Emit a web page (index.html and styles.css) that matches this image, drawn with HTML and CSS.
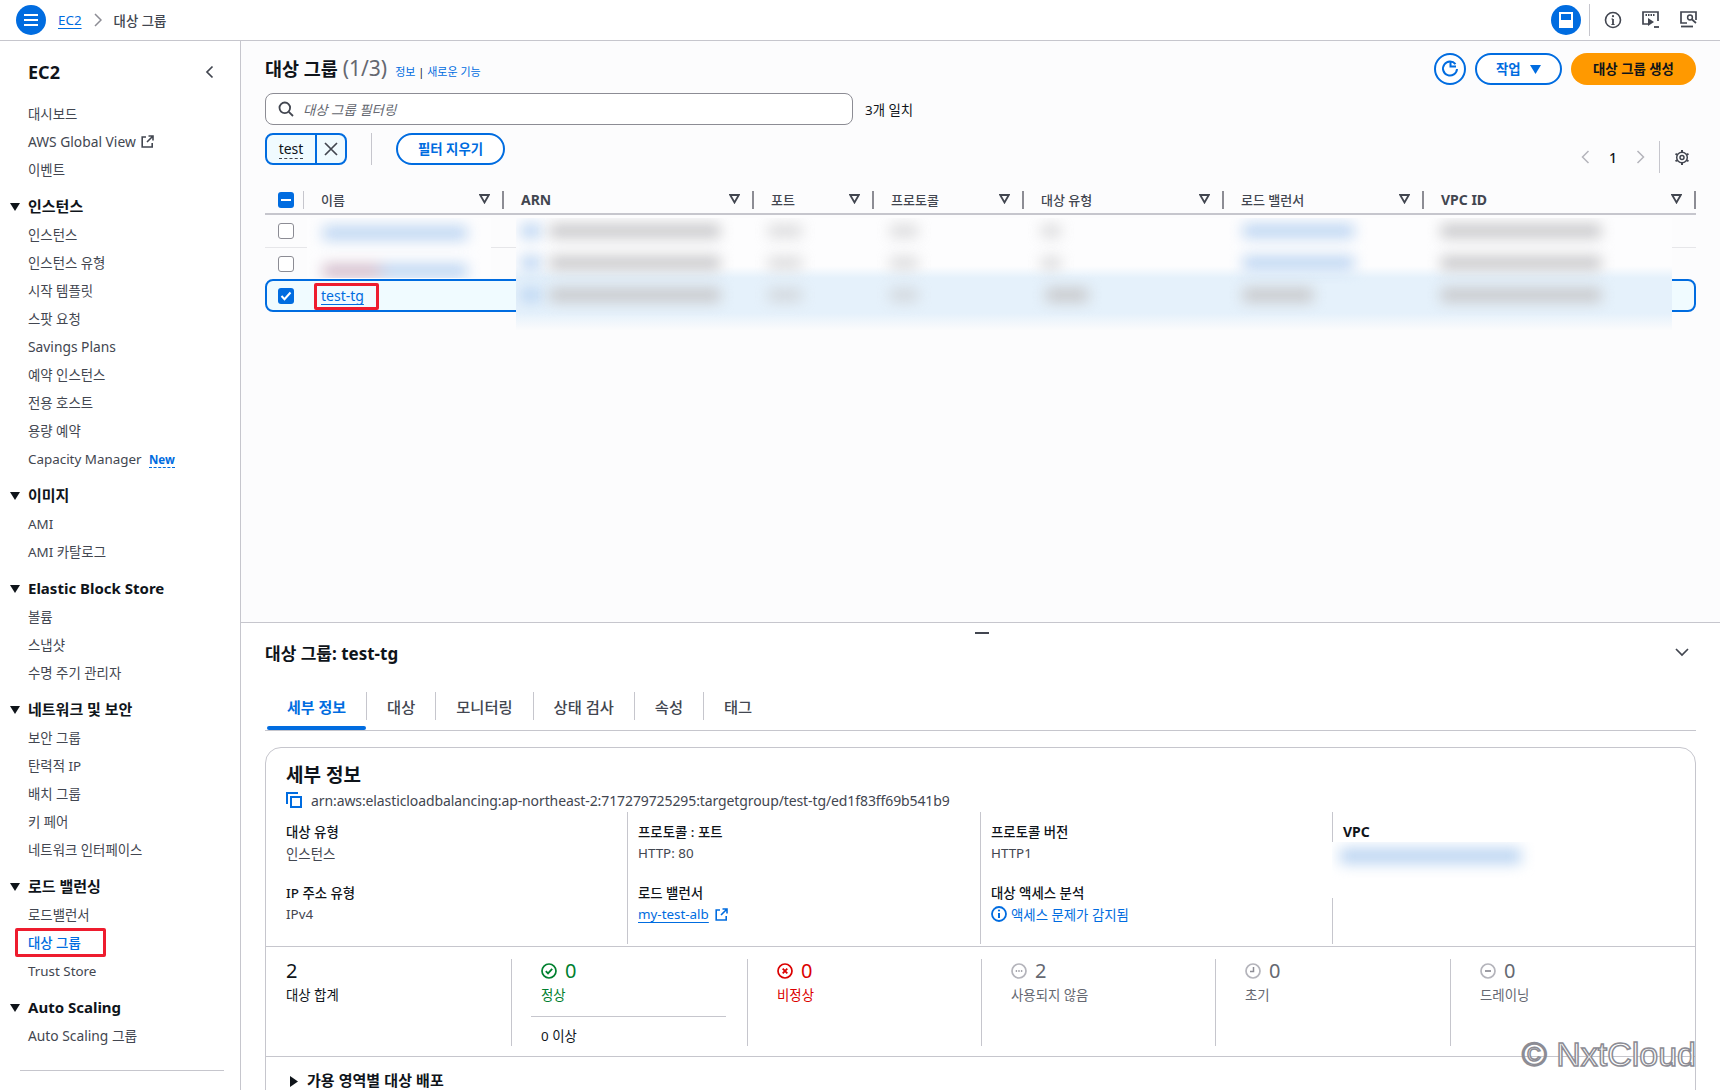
FILE: index.html
```html
<!DOCTYPE html>
<html lang="ko">
<head>
    <meta charset="UTF-8">
    <title>대상 그룹 | EC2</title>
    <link rel="stylesheet" href="styles.css">
</head>
<body>
    <header class="topbar">
        <button class="round-btn menu-btn">
            <svg width="16" height="14" viewBox="0 0 16 14"><path d="M1 2h14M1 7h14M1 12h14" stroke="#fff" stroke-width="2" fill="none"/></svg>
        </button>
        <a class="crumb-link">EC2</a>
        <svg class="crumb-sep" width="8" height="14" viewBox="0 0 8 14"><path d="M1 1l6 6-6 6" stroke="#8c8c94" stroke-width="1.5" fill="none"/></svg>
        <span class="crumb-current">대상 그룹</span>
        <div class="topbar-right">
            <button class="round-btn panel-btn">
                <svg width="14" height="16" viewBox="0 0 14 16"><rect x="1" y="1" width="12" height="14" fill="none" stroke="#fff" stroke-width="2"/><rect x="1" y="8" width="12" height="7" fill="#fff"/></svg>
            </button>
            <span class="topbar-div"></span>
            <svg class="top-icon" width="18" height="18" viewBox="0 0 18 18"><circle cx="9" cy="9" r="7.5" fill="none" stroke="#424650" stroke-width="1.6"/><path d="M9 8v5.5" stroke="#424650" stroke-width="1.8"/><circle cx="9" cy="5.2" r="1.1" fill="#424650"/><path d="M7.4 8h1.6M7.4 13.5h3.2" stroke="#424650" stroke-width="1.2"/></svg>
            <svg class="top-icon" width="18" height="18" viewBox="0 0 18 18"><path d="M6 13H1V1h15v9" fill="none" stroke="#424650" stroke-width="1.7"/><path d="M3.5 4h9" stroke="#424650" stroke-width="2" stroke-dasharray="1.5 1"/><path d="M6 7l6 4-6 4z" fill="#424650"/><path d="M12 16h5" stroke="#424650" stroke-width="1.8"/></svg>
            <svg class="top-icon" width="18" height="18" viewBox="0 0 18 18"><path d="M7 12H1V1h15v8" fill="none" stroke="#424650" stroke-width="1.7"/><circle cx="10" cy="6.5" r="2.4" fill="none" stroke="#424650" stroke-width="1.5"/><path d="M12 8.5l4 3.5" stroke="#424650" stroke-width="1.7"/><path d="M1 15.5h12" stroke="#424650" stroke-width="1.8"/></svg>
        </div>
    </header>

    <div class="layout">
        <aside class="sidebar">
            <div class="side-title">
                <span>EC2</span>
                <svg width="9" height="14" viewBox="0 0 9 14"><path d="M7.5 1.5L2 7l5.5 5.5" stroke="#424650" stroke-width="1.7" fill="none"/></svg>
            </div>
            <ul class="nav-list">
                <li>대시보드</li>
                <li class="nav-latin">AWS Global View <svg class="ext-icon" width="13" height="13" viewBox="0 0 13 13"><path d="M5 2H1.2v10h10V8M7.5 1h4.5v4.5M12 1L6 7" fill="none" stroke="#424650" stroke-width="1.6"/></svg></li>
                <li>이벤트</li>
            </ul>
            <h3 class="nav-head">인스턴스</h3>
            <ul class="nav-list">
                <li>인스턴스</li>
                <li>인스턴스 유형</li>
                <li>시작 템플릿</li>
                <li>스팟 요청</li>
                <li class="nav-latin">Savings Plans</li>
                <li>예약 인스턴스</li>
                <li>전용 호스트</li>
                <li>용량 예약</li>
                <li>Capacity Manager <span class="new-tag">New</span></li>
            </ul>
            <h3 class="nav-head">이미지</h3>
            <ul class="nav-list">
                <li>AMI</li>
                <li>AMI 카탈로그</li>
            </ul>
            <h3 class="nav-head">Elastic Block Store</h3>
            <ul class="nav-list">
                <li>볼륨</li>
                <li>스냅샷</li>
                <li>수명 주기 관리자</li>
            </ul>
            <h3 class="nav-head">네트워크 및 보안</h3>
            <ul class="nav-list">
                <li>보안 그룹</li>
                <li>탄력적 IP</li>
                <li>배치 그룹</li>
                <li>키 페어</li>
                <li>네트워크 인터페이스</li>
            </ul>
            <h3 class="nav-head">로드 밸런싱</h3>
            <ul class="nav-list">
                <li>로드밸런서</li>
                <li class="nav-active">대상 그룹</li>
                <li>Trust Store</li>
            </ul>
            <h3 class="nav-head">Auto Scaling</h3>
            <ul class="nav-list">
                <li class="nav-latin">Auto Scaling 그룹</li>
            </ul>
            <div class="side-rule"></div>
        </aside>

        <main class="main">
            <section class="list-panel">
                <div class="title-row">
                    <h1 class="page-title">대상 그룹 <span class="count">(1/3)</span></h1>
                    <span class="title-links"><a>정보</a> | <a>새로운 기능</a></span>
                    <div class="actions">
                        <button class="btn-refresh">
                            <svg width="18" height="18" viewBox="0 0 18 18"><path d="M14.5 4.2A7 7 0 1 0 16 9" fill="none" stroke="#006ce0" stroke-width="2"/><path d="M9.5 1v5.5H15" fill="none" stroke="#006ce0" stroke-width="2"/></svg>
                        </button>
                        <button class="btn-outline btn-action">작업 <svg width="11" height="9" viewBox="0 0 11 9"><path d="M0 0h11L5.5 9z" fill="#006ce0"/></svg></button>
                        <button class="btn-primary">대상 그룹 생성</button>
                    </div>
                </div>

                <div class="search-row">
                    <div class="search-box">
                        <svg width="16" height="16" viewBox="0 0 16 16"><circle cx="6.8" cy="6.8" r="5.3" fill="none" stroke="#424650" stroke-width="1.8"/><path d="M10.8 10.8l4.2 4.2" stroke="#424650" stroke-width="1.8"/></svg>
                        <span>대상 그룹 필터링</span>
                    </div>
                    <span class="match-count">3개 일치</span>
                </div>

                <div class="chip-row">
                    <div class="chip">
                        <span class="chip-text"><span>test</span></span>
                        <span class="chip-close">
                            <svg width="14" height="14" viewBox="0 0 14 14"><path d="M1 1l12 12M13 1L1 13" stroke="#424650" stroke-width="1.7"/></svg>
                        </span>
                    </div>
                    <span class="chip-div"></span>
                    <button class="btn-outline btn-clear">필터 지우기</button>
                    <div class="pager">
                        <svg width="9" height="14" viewBox="0 0 9 14"><path d="M7.5 1L1.5 7l6 6" stroke="#b4b4bb" stroke-width="1.5" fill="none"/></svg>
                        <span class="page-num">1</span>
                        <svg width="9" height="14" viewBox="0 0 9 14"><path d="M1.5 1l6 6-6 6" stroke="#b4b4bb" stroke-width="1.5" fill="none"/></svg>
                        <span class="pager-div"></span>
                        <svg width="16" height="17" viewBox="0 0 16 17"><circle cx="8" cy="8.5" r="5.3" fill="none" stroke="#424650" stroke-width="1.5"/><circle cx="8" cy="8.5" r="2" fill="none" stroke="#424650" stroke-width="1.5"/><path d="M8 1v2M8 14v2M1.5 4.75l1.73 1M12.77 11.25l1.73 1M1.5 12.25l1.73-1M12.77 5.75l1.73-1" stroke="#424650" stroke-width="2"/></svg>
                    </div>
                </div>

                <div class="table">
                    <div class="table-head">
                        <div class="th th-check"><span class="cb cb-on"><svg width="10" height="2" viewBox="0 0 10 2"><path d="M0 1h10" stroke="#fff" stroke-width="2"/></svg></span></div>
                        <div class="th">이름 <svg class="filter-ic" width="11" height="10" viewBox="0 0 11 10"><path d="M1.2 1h8.6L5.5 8.5z" fill="none" stroke="#424650" stroke-width="1.8"/></svg></div>
                        <div class="th th-latin">ARN <svg class="filter-ic" width="11" height="10" viewBox="0 0 11 10"><path d="M1.2 1h8.6L5.5 8.5z" fill="none" stroke="#424650" stroke-width="1.8"/></svg></div>
                        <div class="th">포트 <svg class="filter-ic" width="11" height="10" viewBox="0 0 11 10"><path d="M1.2 1h8.6L5.5 8.5z" fill="none" stroke="#424650" stroke-width="1.8"/></svg></div>
                        <div class="th">프로토콜 <svg class="filter-ic" width="11" height="10" viewBox="0 0 11 10"><path d="M1.2 1h8.6L5.5 8.5z" fill="none" stroke="#424650" stroke-width="1.8"/></svg></div>
                        <div class="th">대상 유형 <svg class="filter-ic" width="11" height="10" viewBox="0 0 11 10"><path d="M1.2 1h8.6L5.5 8.5z" fill="none" stroke="#424650" stroke-width="1.8"/></svg></div>
                        <div class="th">로드 밸런서 <svg class="filter-ic" width="11" height="10" viewBox="0 0 11 10"><path d="M1.2 1h8.6L5.5 8.5z" fill="none" stroke="#424650" stroke-width="1.8"/></svg></div>
                        <div class="th th-latin">VPC ID <svg class="filter-ic" width="11" height="10" viewBox="0 0 11 10"><path d="M1.2 1h8.6L5.5 8.5z" fill="none" stroke="#424650" stroke-width="1.8"/></svg></div>
                    </div>
                    <div class="tr"><span class="cb"></span></div>
                    <div class="tr tr-second"><span class="cb"></span></div>
                    <div class="tr tr-selected">
                        <span class="cb cb-on"><svg width="12" height="10" viewBox="0 0 12 10"><path d="M1.5 5l3 3.2L10.5 1.5" fill="none" stroke="#fff" stroke-width="2"/></svg></span>
                        <a class="name-link">test-tg</a>
                    </div>
                </div>

                <!-- 가려진 값 -->
                <div class="mask mask-name">
                    <span class="smear smear-blue smear-name"></span>
                    <span class="smear smear-mix smear-name"></span>
                </div>
                <div class="mask mask-rest">
                    <div class="mask-row">
                        <span class="smear smear-blue s-arn-a"></span><span class="smear s-arn-b"></span><span class="smear s-faint s-port"></span><span class="smear s-faint s-proto"></span><span class="smear s-faint s-type"></span><span class="smear smear-blue s-lb"></span><span class="smear s-vpc"></span>
                    </div>
                    <div class="mask-row">
                        <span class="smear smear-blue s-arn-a"></span><span class="smear s-arn-b"></span><span class="smear s-faint s-port"></span><span class="smear s-faint s-proto"></span><span class="smear s-faint s-type"></span><span class="smear smear-blue s-lb"></span><span class="smear s-vpc"></span>
                    </div>
                    <div class="mask-row">
                        <span class="smear smear-blue s-arn-a"></span><span class="smear s-arn-b"></span><span class="smear s-faint s-port"></span><span class="smear s-faint s-proto"></span><span class="smear s-type-long"></span><span class="smear s-lb-short"></span><span class="smear s-vpc s-vpc-far"></span>
                    </div>
                </div>
            </section>

            <section class="detail-panel">
                <div class="drag-handle"></div>
                <div class="detail-head">
                    <h2>대상 그룹: test-tg</h2>
                    <svg width="14" height="9" viewBox="0 0 14 9"><path d="M1 1l6 6 6-6" stroke="#424650" stroke-width="1.7" fill="none"/></svg>
                </div>
                <nav class="tabs">
                    <a class="tab tab-active">세부 정보</a>
                    <a class="tab">대상</a>
                    <a class="tab">모니터링</a>
                    <a class="tab">상태 검사</a>
                    <a class="tab">속성</a>
                    <a class="tab">태그</a>
                </nav>

                <div class="card">
                    <div class="card-top">
                        <h2>세부 정보</h2>
                        <div class="arn-line">
                            <svg width="16" height="16" viewBox="0 0 16 16"><path d="M1 12V1h11" fill="none" stroke="#006ce0" stroke-width="2"/><rect x="5" y="5" width="10" height="10" fill="none" stroke="#006ce0" stroke-width="2"/></svg>
                            <span>arn:aws:elasticloadbalancing:ap-northeast-2:717279725295:targetgroup/test-tg/ed1f83ff69b541b9</span>
                        </div>
                    </div>
                    <div class="info-grid">
                        <div class="info-col">
                            <div class="info-label">대상 유형</div>
                            <div class="info-value">인스턴스</div>
                            <div class="info-label">IP 주소 유형</div>
                            <div class="info-value">IPv4</div>
                        </div>
                        <div class="info-col">
                            <div class="info-label">프로토콜 : 포트</div>
                            <div class="info-value">HTTP: 80</div>
                            <div class="info-label">로드 밸런서</div>
                            <div class="info-value"><a class="link">my-test-alb</a> <svg width="13" height="13" viewBox="0 0 13 13"><path d="M5 2H1.2v10h10V8M7.5 1h4.5v4.5M12 1L6 7" fill="none" stroke="#006ce0" stroke-width="1.6"/></svg></div>
                        </div>
                        <div class="info-col">
                            <div class="info-label">프로토콜 버전</div>
                            <div class="info-value">HTTP1</div>
                            <div class="info-label">대상 액세스 분석</div>
                            <div class="info-value info-blue">
                                <svg width="16" height="16" viewBox="0 0 16 16"><circle cx="8" cy="8" r="7" fill="none" stroke="#006ce0" stroke-width="1.8"/><path d="M8 7v5" stroke="#006ce0" stroke-width="2"/><circle cx="8" cy="4.5" r="1.1" fill="#006ce0"/></svg>
                                <span>액세스 문제가 감지됨</span>
                            </div>
                        </div>
                        <div class="info-col">
                            <div class="info-label info-label-strong">VPC</div>
                            <div class="vpc-mask"><span class="smear smear-blue"></span></div>
                        </div>
                    </div>
                    <div class="stats">
                        <div class="stat">
                            <div class="stat-num">2</div>
                            <div class="stat-label">대상 합계</div>
                        </div>
                        <div class="stat stat-ok">
                            <div class="stat-num">
                                <svg width="16" height="16" viewBox="0 0 16 16"><circle cx="8" cy="8" r="7" fill="none" stroke="#00802f" stroke-width="1.7"/><path d="M4.8 8.2l2.2 2.2 4.2-4.6" fill="none" stroke="#00802f" stroke-width="1.8"/></svg>
                                0
                            </div>
                            <div class="stat-label">정상</div>
                            <div class="stat-rule"></div>
                            <div class="stat-note">0 이상</div>
                        </div>
                        <div class="stat stat-bad">
                            <div class="stat-num">
                                <svg width="16" height="16" viewBox="0 0 16 16"><circle cx="8" cy="8" r="7" fill="none" stroke="#db0000" stroke-width="1.7"/><path d="M5.7 5.7l4.6 4.6M10.3 5.7l-4.6 4.6" stroke="#db0000" stroke-width="1.8"/></svg>
                                0
                            </div>
                            <div class="stat-label">비정상</div>
                        </div>
                        <div class="stat stat-muted">
                            <div class="stat-num">
                                <svg width="16" height="16" viewBox="0 0 16 16"><circle cx="8" cy="8" r="7" fill="none" stroke="#b4b4bb" stroke-width="1.7"/><path d="M4.7 8h1.4M7.3 8h1.4M9.9 8h1.4" stroke="#8c8c94" stroke-width="1.5"/></svg>
                                2
                            </div>
                            <div class="stat-label">사용되지 않음</div>
                        </div>
                        <div class="stat stat-muted">
                            <div class="stat-num">
                                <svg width="16" height="16" viewBox="0 0 16 16"><circle cx="8" cy="8" r="7" fill="none" stroke="#b4b4bb" stroke-width="1.7"/><path d="M8.5 4v4.5H5" fill="none" stroke="#8c8c94" stroke-width="1.5"/></svg>
                                0
                            </div>
                            <div class="stat-label">초기</div>
                        </div>
                        <div class="stat stat-muted">
                            <div class="stat-num">
                                <svg width="16" height="16" viewBox="0 0 16 16"><circle cx="8" cy="8" r="7" fill="none" stroke="#b4b4bb" stroke-width="1.7"/><path d="M5 8h6" stroke="#8c8c94" stroke-width="1.7"/></svg>
                                0
                            </div>
                            <div class="stat-label">드레이닝</div>
                        </div>
                    </div>
                    <div class="az-row">
                        <svg width="8" height="11" viewBox="0 0 8 11"><path d="M0 0l8 5.5L0 11z" fill="#0f141a"/></svg>
                        <span>가용 영역별 대상 배포</span>
                    </div>
                </div>
            </section>
        </main>
    </div>

    <div class="watermark">© NxtCloud</div>
</body>
</html>
```

FILE: styles.css
```css
*, *::before, *::after {
    box-sizing: border-box;
}

body {
    margin: 0;
    width: 1720px;
    height: 1090px;
    overflow: hidden;
    position: relative;
    font-family: "Noto Sans", "Noto Sans CJK KR", sans-serif;
    font-size: 13.4px;
    color: #0f141a;
    background-color: #fff;
}

h1, h2, h3 {
    margin: 0;
}

button {
    font-family: inherit;
    cursor: pointer;
}

/* 상단 바 */
.topbar {
    display: flex;
    align-items: center;
    height: 41px;
    padding: 0 22px 0 16px;
    border-bottom: 1px solid #c6c6cd;
}

.round-btn {
    display: flex;
    align-items: center;
    justify-content: center;
    width: 30px;
    height: 30px;
    padding: 0;
    border: none;
    border-radius: 50%;
    background-color: #006ce0;
}

.crumb-link {
    margin-left: 12px;
    color: #006ce0;
    text-decoration: underline;
    text-underline-offset: 3px;
}

.crumb-sep {
    margin: 0 12px;
}

.crumb-current {
    color: #424650;
    font-weight: 500;
}

.topbar-right {
    display: flex;
    align-items: center;
    margin-left: auto;
}

.topbar-div {
    width: 1px;
    height: 32px;
    margin-left: 8px;
    background-color: #c6c6cd;
}

.top-icon {
    margin-left: 14px;
}

.top-icon + .top-icon {
    margin-left: 20px;
}

.layout {
    display: flex;
    height: 1049px;
}

/* 사이드바 */
.sidebar {
    flex: 0 0 241px;
    padding: 18px 0 0 28px;
    border-right: 1px solid #c6c6cd;
    overflow: hidden;
}

.side-title {
    display: flex;
    justify-content: space-between;
    align-items: center;
    width: 186px;
    height: 26px;
    margin-bottom: 15px;
    font-size: 18px;
    font-weight: 700;
}

.nav-list {
    list-style: none;
    margin: 0;
    padding: 0;
}

.nav-list li {
    position: relative;
    height: 28px;
    line-height: 28px;
    color: #424650;
}

.nav-list .nav-latin {
    font-size: 13.8px;
}

.nav-head {
    position: relative;
    height: 29px;
    margin-top: 8px;
    font-size: 15px;
    line-height: 29px;
    font-weight: 700;
}

.nav-head::before {
    content: "";
    position: absolute;
    left: -18px;
    top: 11px;
    border-left: 5px solid transparent;
    border-right: 5px solid transparent;
    border-top: 8px solid #0f141a;
}

.ext-icon {
    margin-left: 2px;
    vertical-align: -1px;
}

.new-tag {
    margin-left: 4px;
    color: #006ce0;
    font-size: 11.5px;
    font-weight: 700;
    border-bottom: 1px dashed #006ce0;
}

.nav-list .nav-active {
    color: #006ce0;
    font-weight: 500;
}

.nav-active::after {
    content: "";
    position: absolute;
    left: -13px;
    top: -1px;
    width: 91px;
    height: 29px;
    border: 3px solid #ee1c2e;
    border-radius: 2px;
}

.side-rule {
    width: 204px;
    margin: 20px 0 0 -8px;
    border-top: 1px solid #c6c6cd;
}

.main {
    flex: 1;
    display: flex;
    flex-direction: column;
    min-width: 0;
}

/* 목록 패널 */
.list-panel {
    position: relative;
    height: 582px;
    padding: 12px 24px 0;
    background-color: #fcfcfd;
    border-bottom: 1px solid #c6c6cd;
}

.title-row {
    display: flex;
    align-items: center;
    height: 32px;
}

.page-title {
    font-size: 18.5px;
    font-weight: 700;
    margin-top: -2px;
}

.count {
    color: #656871;
    font-size: 21px;
    font-weight: 400;
}

.title-links {
    margin: 3px 0 0 8px;
    font-size: 11px;
    color: #0f141a;
}

.title-links a {
    color: #006ce0;
}

.actions {
    display: flex;
    gap: 9px;
    margin-left: auto;
}

.btn-refresh {
    display: flex;
    align-items: center;
    justify-content: center;
    width: 32px;
    height: 32px;
    padding: 0;
    border: 2px solid #006ce0;
    border-radius: 50%;
    background-color: #fff;
}

.btn-outline {
    height: 32px;
    padding: 0 0 2px;
    border: 2px solid #006ce0;
    border-radius: 20px;
    background-color: #fff;
    color: #006ce0;
    font-size: 13.4px;
    font-weight: 700;
}

.btn-action {
    width: 87px;
}

.btn-action svg {
    margin-left: 6px;
}

.btn-primary {
    width: 125px;
    height: 32px;
    padding: 0 0 2px;
    border: none;
    border-radius: 20px;
    background-color: #ff9900;
    color: #0f141a;
    font-size: 13.4px;
    font-weight: 700;
}

.search-row {
    display: flex;
    align-items: center;
    margin-top: 8px;
}

.search-box {
    display: flex;
    align-items: center;
    gap: 9px;
    width: 588px;
    height: 32px;
    padding: 0 12px;
    border: 1px solid #8c8c94;
    border-radius: 8px;
    background-color: #fff;
    color: #656871;
    font-style: italic;
}

.match-count {
    margin-left: 12px;
}

.chip-row {
    display: flex;
    align-items: flex-start;
    height: 40px;
    margin-top: 8px;
}

.chip {
    display: flex;
    width: 82px;
    height: 32px;
    border: 2px solid #006ce0;
    border-radius: 8px;
    background-color: #f0fbff;
    font-size: 14px;
}

.chip-text {
    display: flex;
    align-items: center;
    justify-content: center;
    width: 50px;
    border-right: 2px solid #006ce0;
}

.chip-text span {
    line-height: 18px;
    border-bottom: 1px dashed #424650;
}

.chip-close {
    display: flex;
    align-items: center;
    justify-content: center;
    flex: 1;
}

.chip-div {
    width: 1px;
    height: 32px;
    margin: 0 24px;
    background-color: #c6c6cd;
}

.btn-clear {
    width: 109px;
}

.pager {
    display: flex;
    align-items: center;
    align-self: flex-end;
    height: 32px;
    margin-left: auto;
    padding-right: 6px;
}

.page-num {
    width: 46px;
    text-align: center;
    font-size: 14px;
    font-weight: 500;
}

.pager-div {
    width: 1px;
    height: 32px;
    margin: 0 14px;
    background-color: #c6c6cd;
}

/* 테이블 */
.table {
    width: 1431px;
    margin-top: 13px;
}

.table-head {
    display: grid;
    grid-template-columns: 39px 200px 250px 120px 150px 200px 200px 272px;
    height: 29px;
    border-bottom: 2px solid #c6c6cd;
    font-size: 13px;
}

.th {
    display: flex;
    align-items: center;
    justify-content: space-between;
    height: 18px;
    margin-top: 5px;
    padding: 0 12px 2px 17px;
    border-right: 2px solid #8c8c94;
    color: #424650;
    font-weight: 500;
}

.th-latin {
    font-size: 14px;
    font-weight: 700;
}

.th-check {
    padding: 0 0 0 13px;
    border-right: 1px solid #c6c6cd;
}

.cb {
    display: flex;
    align-items: center;
    justify-content: center;
    flex: 0 0 16px;
    width: 16px;
    height: 16px;
    border: 1px solid #8c8c94;
    border-radius: 3px;
    background-color: #fff;
}

.cb-on {
    border: none;
    background-color: #006ce0;
}

.tr {
    display: flex;
    align-items: center;
    height: 33px;
    padding-left: 13px;
    border-bottom: 1px solid #e6e6e9;
}

.tr-second {
    height: 31px;
    border-bottom: none;
}

.tr-selected {
    position: relative;
    height: 33px;
    border: 2px solid #006ce0;
    border-radius: 8px;
    padding-left: 11px;
    background-color: #f0fbff;
}

.name-link {
    margin-left: 27px;
    color: #006ce0;
    font-size: 14px;
    text-decoration: underline;
    text-underline-offset: 3px;
}

.tr-selected::after {
    content: "";
    position: absolute;
    left: 47px;
    top: 2px;
    width: 65px;
    height: 27px;
    border: 3px solid #ee1c2e;
    border-radius: 2px;
}

/* 흐림 처리 */
.mask {
    position: absolute;
    overflow: hidden;
}

.mask-name {
    left: 66px;
    top: 177px;
    width: 184px;
    height: 60px;
    background-color: #fdfdfe;
}

.mask-rest {
    left: 275px;
    top: 177px;
    width: 1156px;
    height: 112px;
    background: linear-gradient(#fdfdfe 48px, #e5f1fb 60px, #e5f1fb 95px, #fbfbfc 112px);
}

.mask-row {
    display: flex;
    align-items: center;
    height: 32px;
}

.mask-row:first-child {
    margin-top: -3px;
}

.smear {
    display: block;
    height: 14px;
    background-color: #c8c8ca;
    filter: blur(7px);
}

.smear-blue {
    background-color: #bcd5f2;
}

.smear-mix {
    background: linear-gradient(90deg, #d3bccb 35%, #bcd5f2 45%);
}

.s-faint {
    opacity: 0.6;
}

.smear-name {
    width: 144px;
    margin: 8px 0 0 16px;
}

.mask-name .smear + .smear {
    margin-top: 24px;
}

.s-arn-a { width: 20px; margin-left: 5px; }
.s-arn-b { width: 170px; margin-left: 9px; }
.s-port { width: 34px; margin-left: 48px; }
.s-proto { width: 28px; margin-left: 88px; }
.s-type { width: 20px; margin-left: 123px; }
.s-type-long { width: 42px; margin-left: 128px; }
.s-lb { width: 111px; margin-left: 182px; }
.s-lb-short { width: 70px; margin-left: 155px; }
.s-vpc { width: 160px; margin-left: 87px; }
.s-vpc-far { margin-left: 128px; }

/* 상세 패널 */
.detail-panel {
    position: relative;
    flex: 1;
    padding: 0 24px;
    overflow: hidden;
}

.drag-handle {
    position: absolute;
    left: 734px;
    top: 9px;
    width: 14px;
    height: 2px;
    background-color: #424650;
}

.detail-head {
    display: flex;
    justify-content: space-between;
    align-items: center;
    height: 30px;
    margin-top: 14px;
    padding-right: 7px;
}

.detail-head h2 {
    font-size: 17px;
    font-weight: 700;
}

.tabs {
    display: flex;
    align-items: flex-start;
    height: 39px;
    margin-top: 25px;
    padding-left: 2px;
    border-bottom: 1px solid #c6c6cd;
}

.tab {
    position: relative;
    height: 28px;
    padding: 0 20px;
    border-right: 1px solid #c6c6cd;
    font-size: 15.3px;
    line-height: 30px;
    color: #424650;
    font-weight: 500;
}

.tab:last-child {
    border-right: none;
}

.tab-active {
    color: #006ce0;
    font-size: 15px;
    font-weight: 700;
}

.tab-active::after {
    content: "";
    position: absolute;
    left: 0;
    right: 0;
    top: 34px;
    height: 4px;
    border-radius: 2px;
    background-color: #006ce0;
}

.card {
    height: 400px;
    margin-top: 16px;
    border: 1px solid #c6c6cd;
    border-radius: 16px;
    background-color: #fff;
}

.card-top {
    padding: 14px 20px 0;
}

.card-top h2 {
    font-size: 19px;
    font-weight: 700;
    line-height: 26px;
}

.arn-line {
    display: flex;
    align-items: center;
    gap: 9px;
    height: 24px;
    font-size: 14px;
    letter-spacing: -0.1px;
    color: #424650;
}

.info-grid {
    display: grid;
    grid-template-columns: 361px 353px 352px 1fr;
    height: 125px;
}

.info-col {
    padding: 10px 0 0 20px;
}

.info-col + .info-col {
    padding-left: 10px;
    border-left: 1px solid #c6c6cd;
}

.info-label {
    height: 20px;
    line-height: 20px;
    font-weight: 500;
}

.info-label-strong {
    font-size: 14px;
    font-weight: 700;
}

.info-value {
    display: flex;
    align-items: center;
    gap: 6px;
    height: 22px;
    margin: 0 0 19px;
    color: #424650;
}

.link {
    color: #006ce0;
    text-decoration: underline;
    text-underline-offset: 3px;
}

.info-blue {
    color: #006ce0;
    gap: 4px;
}

.vpc-mask {
    display: flex;
    align-items: flex-start;
    width: 209px;
    height: 56px;
    margin: 0 0 0 -11px;
    padding: 6px 20px 0 8px;
    background-color: #fff;
    position: relative;
    overflow: hidden;
}

.vpc-mask .smear {
    flex: 1;
    height: 16px;
}

.stats {
    display: grid;
    grid-template-columns: 245px 236px 234px 234px 235px 1fr;
    height: 111px;
    margin-top: 9px;
    padding: 12px 0 10px;
    border-top: 1px solid #c6c6cd;
    border-bottom: 1px solid #c6c6cd;
}

.stat {
    padding: 0 0 0 29px;
}

.stat:first-child {
    padding-left: 20px;
}

.stat + .stat {
    border-left: 1px solid #c6c6cd;
    height: 87px;
}

.stat-num {
    display: flex;
    align-items: center;
    gap: 8px;
    height: 27px;
    margin-top: -2px;
    font-size: 20px;
}

.stat-label {
    height: 20px;
    margin-top: 1px;
    line-height: 20px;
}

.stat-ok .stat-num, .stat-ok .stat-label {
    color: #00802f;
}

.stat-bad .stat-num, .stat-bad .stat-label {
    color: #db0000;
}

.stat-muted .stat-num, .stat-muted .stat-label {
    color: #656871;
}

.stat-rule {
    width: 195px;
    margin: 11px 0 0 -10px;
    border-top: 1px solid #c6c6cd;
}

.stat-note {
    height: 20px;
    margin-top: 9px;
    line-height: 20px;
}

.az-row {
    display: flex;
    align-items: center;
    gap: 9px;
    height: 16px;
    margin-top: 16px;
    padding-left: 24px;
    font-family: "Liberation Sans", "Noto Sans CJK KR", sans-serif;
    font-size: 15px;
    line-height: 16px;
    font-weight: 700;
}

/* 워터마크 */
.watermark {
    position: absolute;
    right: 24px;
    bottom: 19px;
    font-family: "Liberation Sans", sans-serif;
    font-size: 34px;
    line-height: 34px;
    color: #fff;
    -webkit-text-stroke: 1.5px #8c8c94;
}
```
